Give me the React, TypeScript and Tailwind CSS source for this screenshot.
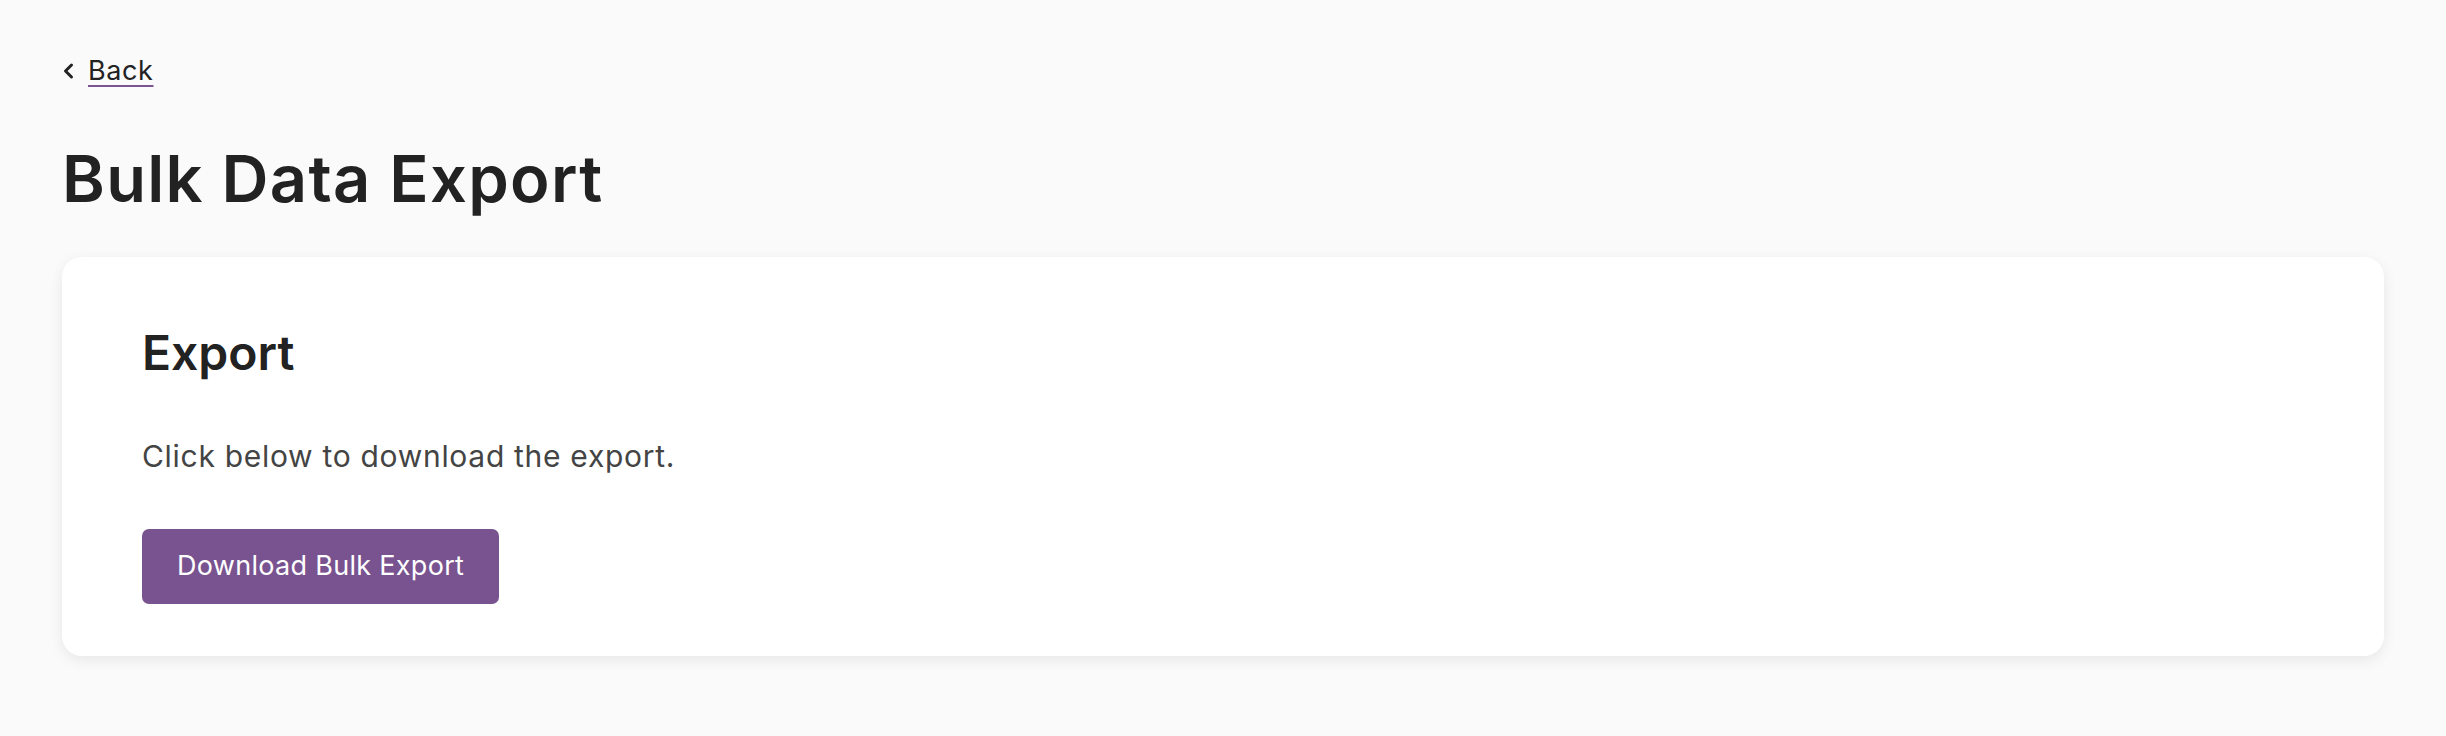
import React from "react"

const ChevronLeft = () => (
  <svg width="13" height="18" viewBox="0 0 13 18" fill="none" className="shrink-0">
    <path d="M9.5 3 L3.5 9 L9.5 15" stroke="#222222" strokeWidth="3" strokeLinecap="round" strokeLinejoin="round" />
  </svg>
)

export default function App() {
  return (
    <div className="min-h-screen w-full bg-[#fafafa] px-[62px] pt-[53px] pb-10 text-[#222222] [font-family:Inter,'Noto_Sans',sans-serif]">
      <a href="#" className="flex items-center gap-[13px] w-fit">
        <ChevronLeft />
        <span className="text-[27px] leading-[36px] underline decoration-[#7b5492] decoration-2 underline-offset-[5px] tracking-[0.6px]">
          Back
        </span>
      </a>

      <h1 className="mt-[54px] text-[65px] leading-[72px] font-semibold tracking-[1.3px]">
        Bulk Data Export
      </h1>

      <div className="mt-[42px] rounded-[20px] bg-white shadow-[0_4px_14px_rgba(0,0,0,0.08)] px-[80px] pt-[68px] pb-[52px]">
        <h2 className="text-[48px] leading-[56px] font-semibold tracking-[0px]">Export</h2>
        <p className="mt-[55px] text-[30px] leading-[40px] text-[#444444] tracking-[0.7px]">
          Click below to download the export.
        </p>
        <button className="mt-[53px] h-[75px] rounded-[7px] bg-[#785390] px-[35px] text-[27px] text-white tracking-[0.3px]">
          Download Bulk Export
        </button>
      </div>
    </div>
  )
}
